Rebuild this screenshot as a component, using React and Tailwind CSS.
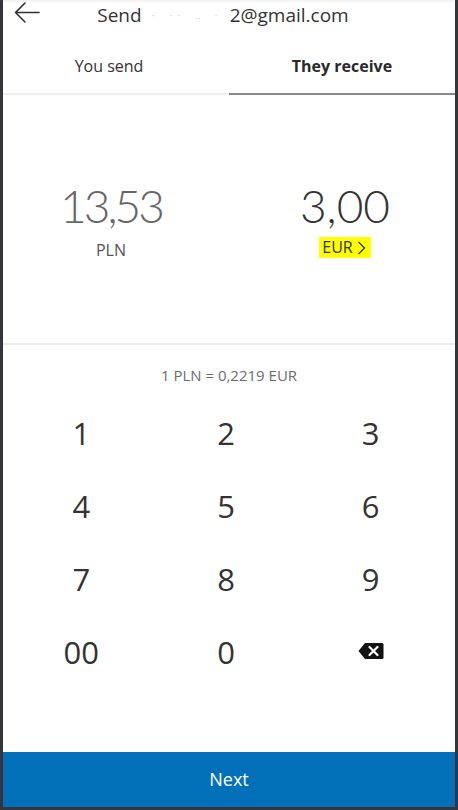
const keys = ['1', '2', '3', '4', '5', '6', '7', '8', '9', '00', '0', 'del']

function BackspaceIcon() {
  return (
    <svg width="26" height="18" viewBox="0 0 26 18">
      <path d="M7 1 H24 a1.5 1.5 0 0 1 1.5 1.5 V15.5 a1.5 1.5 0 0 1 -1.5 1.5 H7 L0.5 9 Z" fill="#111" />
      <path d="M11.5 5 L19.5 13 M19.5 5 L11.5 13" stroke="#fff" strokeWidth="2.2" strokeLinecap="round" />
    </svg>
  )
}

export default function App() {
  return (
    <div className="w-[458px] h-[810px] bg-[#34353d] px-[3px] pb-[3px] font-['Open_Sans',sans-serif]">
      <div className="h-full bg-white flex flex-col">
        <div className="h-[2px] bg-[#f4f4f4]" />
        <div className="relative h-[26px] flex items-center justify-center text-[19px] text-[#333]">
          <svg className="absolute left-[10px] top-[-1px]" width="28" height="24" viewBox="0 0 28 24" fill="none" stroke="#333" strokeWidth="1.6" strokeLinecap="round" strokeLinejoin="round">
            <path d="M26 11.5 H3 M12 2 L2.5 11.5 L12 21" />
          </svg>
          <span className="ml-[-12px]">Send</span>
          <span className="inline-block w-[84px] h-[22px] ml-[4px] bg-white text-[#ccc] text-[10px] leading-[22px] text-center tracking-[6px]">· ·· ‥ ·</span>
          <span>2@gmail.com</span>
        </div>
        <div className="grid grid-cols-2 h-[67px]">
          <div className="flex items-center justify-center text-[16px] text-[#333] border-b-2 border-[#eeeeee] pt-[10px] pr-[14px]">
            You send
          </div>
          <div className="flex items-center justify-center text-[16px] font-bold text-[#2a2a2a] border-b-2 border-[#8a8a8a] pt-[10px]">
            They receive
          </div>
        </div>
        <div className="h-[250px] grid grid-cols-2 border-b-2 border-[#ececec] font-['Lato',sans-serif]">
          <div className="flex flex-col items-center pt-[83px] pr-[10px]">
            <span className="text-[46px] font-light text-[#666] leading-[56px] tracking-[-3px]">13,53</span>
            <span className="text-[16px] text-[#555] leading-[20px] mt-[6px] font-['Open_Sans',sans-serif]">PLN</span>
          </div>
          <div className="flex flex-col items-center pt-[83px] pl-[6px]">
            <span className="text-[46px] font-light text-[#333] leading-[56px]">3,00</span>
            <span className="mt-[3px] bg-[#ffff00] pl-[3px] pr-[5px] text-[16px] text-[#333] leading-[21px] flex items-center font-['Open_Sans',sans-serif]">
              EUR
              <svg className="ml-[4px]" width="9" height="14" viewBox="0 0 9 14" fill="none" stroke="#333" strokeWidth="1.3">
                <path d="M1.5 1 L7.5 7 L1.5 13" />
              </svg>
            </span>
          </div>
        </div>
        <div className="text-center text-[15px] text-[#6b6b6b] pt-[20px] leading-[20px]">1 PLN = 0,2219 EUR</div>
        <div className="grid grid-cols-3 mt-[27px] pl-[6px] pr-[12px]">
          {keys.map(k => (
            <div key={k} className="h-[73px] flex items-center justify-center text-[31px] text-[#333] leading-none pb-[30px]">
              {k === 'del' ? <span className="pb-[4px]"><BackspaceIcon /></span> : k}
            </div>
          ))}
        </div>
        <div className="flex-1" />
        <button className="h-[55px] w-full bg-[#0270b9] text-white text-[18px] flex items-center justify-center">
          Next
        </button>
      </div>
    </div>
  )
}
